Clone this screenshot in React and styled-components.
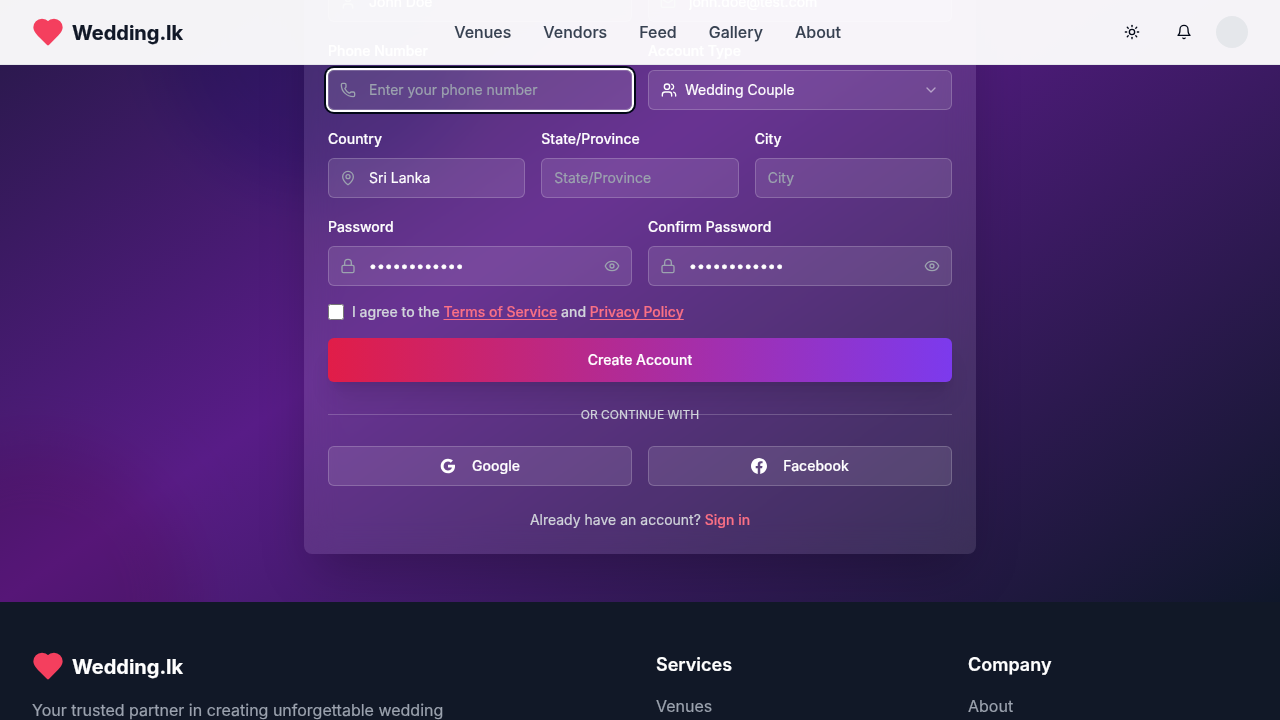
import React from "react";
import styled, { createGlobalStyle } from "styled-components";
import {
  Sun,
  User,
  Mail,
  Phone,
  Users,
  ChevronDown,
  MapPin,
  Lock,
  Eye,
} from "lucide-react";

const GlobalStyle = createGlobalStyle`
  *, *::before, *::after { box-sizing: border-box; }
  body {
    margin: 0;
    font-family: Inter, "Liberation Sans", sans-serif;
    font-size: 16px;
    line-height: 24px;
    background: #ffffff;
    color: #020817;
    -webkit-text-stroke: 0.2px currentColor;
  }
  a { color: inherit; text-decoration: none; }
  h3, p, ul { margin: 0; padding: 0; list-style: none; }
  input, button { font: inherit; }
`;

const Viewport = styled.div`
  height: 720px;
  overflow: hidden;
`;

const Header = styled.header`
  position: fixed;
  inset: 0 0 auto 0;
  z-index: 50;
  display: flex;
  align-items: center;
  justify-content: space-between;
  height: 65px;
  padding: 0 32px;
  background: rgba(255, 255, 255, 0.95);
  border-bottom: 1px solid #e5e7eb;
`;

const Brand = styled.a`
  display: flex;
  align-items: center;
  gap: 8px;
  height: 32px;
  font-size: 20px;
  line-height: 28px;
  font-weight: 700;
  color: ${(p) => (p.$light ? "#ffffff" : "#111827")};
`;

const BrandName = styled.span`
  padding-top: 2px;
`;

const HeartSvg = styled.svg`
  width: 32px;
  height: 32px;
  fill: #f43f5e;
  stroke: #f43f5e;
  stroke-width: 2;
  stroke-linecap: round;
  stroke-linejoin: round;
`;

const Nav = styled.nav`
  display: flex;
  gap: 32px;
  margin-right: 2px;
  -webkit-text-stroke-width: 0.1px;
`;

const NavLink = styled.a`
  font-weight: 500;
  color: #374151;
`;

const HeaderActions = styled.div`
  display: flex;
  align-items: center;
  gap: 16px;
`;

const IconButton = styled.button`
  display: grid;
  place-items: center;
  width: 36px;
  height: 36px;
  padding: 0;
  border: 0;
  background: transparent;
  color: #020817;
`;

const Avatar = styled.div`
  width: 32px;
  height: 32px;
  margin-left: -2px;
  border-radius: 50%;
  background: #e5e7eb;
`;

const Hero = styled.main`
  position: relative;
  display: flex;
  justify-content: center;
  height: 892px;
  margin-top: -290px;
  padding: 48px 0;
  overflow: hidden;
  background: linear-gradient(to bottom right, #0f172a, #581c87, #0f172a);
`;

const Blob = styled.div`
  position: absolute;
  width: 320px;
  height: 320px;
  border-radius: 50%;
  mix-blend-mode: multiply;
  filter: blur(30px);
  opacity: 0.3;
`;

const PinkBlob = styled(Blob)`
  bottom: -160px;
  left: -128px;
  background: #ec4899;
`;

const IndigoBlob = styled(Blob)`
  top: 160px;
  left: 160px;
  background: #6366f1;
`;

const Card = styled.section`
  position: relative;
  display: flex;
  flex-direction: column;
  justify-content: flex-end;
  width: 672px;
  padding: 24px;
  border-radius: 8px;
  background: rgba(255, 255, 255, 0.1);
  box-shadow: 0 25px 50px -12px rgba(0, 0, 0, 0.25);
  backdrop-filter: blur(16px);
`;

const Form = styled.form`
  display: flex;
  flex-direction: column;
  gap: 16px;
`;

const Row = styled.div`
  display: grid;
  grid-template-columns: repeat(${(p) => p.$cols}, minmax(0, 1fr));
  gap: 16px;
`;

const FieldBox = styled.div`
  display: flex;
  flex-direction: column;
  gap: 8px;
`;

const Label = styled.label`
  height: 24px;
  padding-top: 1px;
  font-size: 14px;
  line-height: 24px;
  font-weight: 500;
  color: #ffffff;
`;

const Control = styled.div`
  display: flex;
  align-items: center;
  height: 40px;
  padding: 0 11px;
  border: 1px solid rgba(255, 255, 255, 0.2);
  border-radius: 6px;
  background: rgba(255, 255, 255, 0.1);
  color: #9ca3af;
  box-shadow: ${(p) =>
    p.$focused ? "0 0 0 2px #ffffff, 0 0 0 4px #020817" : "none"};

  svg { flex: none; }
`;

const Input = styled.input`
  flex: 1;
  min-width: 0;
  height: 20px;
  margin-left: ${(p) => (p.$afterIcon ? "13px" : "1px")};
  padding: 0;
  border: 0;
  outline: 0;
  background: transparent;
  font-size: 14px;
  line-height: 20px;
  color: #ffffff;

  &[type="password"] { -webkit-text-stroke-width: 0.5px; }
  &::placeholder { color: #9ca3af; opacity: 1; }
`;

const SelectControl = styled(Control)`
  gap: 8px;
  padding: 0 12px;
  font-size: 14px;
  line-height: 20px;
  color: #ffffff;
`;

const SelectValue = styled.span`
  flex: 1;
`;

const Terms = styled.label`
  display: flex;
  align-items: center;
  gap: 8px;
  height: 20px;
  font-size: 14px;
  line-height: 20px;
  font-weight: 500;
  color: #d1d5db;
`;

const Checkbox = styled.input`
  width: 16px;
  height: 16px;
  margin: 0;
`;

const TermsLink = styled.a`
  color: #fb7185;
  text-decoration: underline;
  text-decoration-skip-ink: none;
  text-underline-offset: 2px;
`;

const SubmitButton = styled.button`
  height: 44px;
  border: 0;
  border-radius: 6px;
  background: linear-gradient(to right, #e11d48, #7c3aed);
  box-shadow: 0 20px 25px -5px rgba(0, 0, 0, 0.1),
    0 8px 10px -6px rgba(0, 0, 0, 0.1);
  font-size: 14px;
  line-height: 20px;
  font-weight: 500;
  color: #ffffff;
`;

const Divider = styled.div`
  display: grid;
  grid-template-rows: 16px;
  align-items: center;
  justify-items: center;
  margin: 24px 0;
  font-size: 12px;
  text-transform: uppercase;
  color: #d1d5db;

  &::before {
    content: "";
    grid-area: 1 / 1;
    width: 100%;
    height: 1px;
    background: rgba(255, 255, 255, 0.2);
  }
`;

const DividerText = styled.span`
  grid-area: 1 / 1;
  height: 16px;
  line-height: 18px;
`;

const SocialButton = styled.button`
  display: flex;
  align-items: center;
  justify-content: center;
  gap: 16px;
  height: 40px;
  padding: 0;
  border: 1px solid rgba(255, 255, 255, 0.2);
  border-radius: 6px;
  background: rgba(255, 255, 255, 0.1);
  font-size: 14px;
  line-height: 20px;
  font-weight: 500;
  color: #ffffff;
`;

const SignIn = styled.p`
  margin-top: 24px;
  font-size: 14px;
  line-height: 20px;
  text-align: center;
  color: #d1d5db;

  a { font-weight: 500; color: #fb7185; }
`;

const Footer = styled.footer`
  display: grid;
  grid-template-columns: 592px 280px 280px;
  gap: 32px;
  padding: 48px 32px;
  background: #111827;
  color: #9ca3af;
`;

const Tagline = styled.p`
  width: 448px;
  margin-top: 16px;
`;

const FooterTitle = styled.h3`
  height: 28px;
  margin-bottom: 16px;
  padding-top: 1px;
  font-size: 18px;
  line-height: 28px;
  font-weight: 600;
  color: #ffffff;
`;

function Heart() {
  return (
    <HeartSvg viewBox="0 0 24 24">
      <path d="M19 14c1.49-1.46 3-3.21 3-5.5A5.5 5.5 0 0 0 16.5 3c-1.76 0-3 .5-4.5 2-1.5-1.5-2.74-2-4.5-2A5.5 5.5 0 0 0 2 8.5c0 2.3 1.5 4.05 3 5.5l7 7Z" />
    </HeartSvg>
  );
}

function BellIcon() {
  return (
    <svg
      width="16"
      height="16"
      viewBox="0 0 24 24"
      fill="none"
      stroke="currentColor"
      strokeWidth="2"
      strokeLinecap="round"
      strokeLinejoin="round"
    >
      <path d="M6 8a6 6 0 0 1 12 0c0 7 3 9 3 9H3s3-2 3-9" />
      <path d="M10.3 21a1.94 1.94 0 0 0 3.4 0" />
    </svg>
  );
}

function GoogleIcon() {
  return (
    <svg width="16" height="16" viewBox="0 0 24 24" fill="currentColor">
      <path d="M22.56 12.25c0-.78-.07-1.53-.2-2.25H12v4.26h5.92c-.26 1.37-1.04 2.53-2.21 3.31v2.77h3.57c2.08-1.92 3.28-4.74 3.28-8.09z" />
      <path d="M12 23c2.97 0 5.46-.98 7.28-2.66l-3.57-2.77c-.98.66-2.23 1.06-3.71 1.06-2.86 0-5.29-1.93-6.16-4.53H2.18v2.84C3.99 20.53 7.7 23 12 23z" />
      <path d="M5.84 14.09c-.22-.66-.35-1.36-.35-2.09s.13-1.43.35-2.09V7.07H2.18C1.43 8.55 1 10.22 1 12s.43 3.45 1.18 4.93l2.85-2.22.81-.62z" />
      <path d="M12 5.38c1.62 0 3.06.56 4.21 1.64l3.15-3.15C17.45 2.09 14.97 1 12 1 7.7 1 3.99 3.47 2.18 7.07l3.66 2.84c.87-2.6 3.3-4.53 6.16-4.53z" />
    </svg>
  );
}

function FacebookIcon() {
  return (
    <svg width="16" height="16" viewBox="0 0 24 24" fill="currentColor">
      <path d="M24 12.073c0-6.627-5.373-12-12-12s-12 5.373-12 12c0 5.99 4.388 10.954 10.125 11.854v-8.385H7.078v-3.47h3.047V9.43c0-3.007 1.792-4.669 4.533-4.669 1.312 0 2.686.235 2.686.235v2.953H15.83c-1.491 0-1.956.925-1.956 1.874v2.25h3.328l-.532 3.47h-2.796v8.385C19.612 23.027 24 18.062 24 12.073z" />
    </svg>
  );
}

function Field({ label, icon: Icon, trailing: Trailing, focused, ...input }) {
  return (
    <FieldBox>
      <Label>{label}</Label>
      <Control $focused={focused}>
        {Icon && <Icon size={16} />}
        <Input $afterIcon={Boolean(Icon)} {...input} />
        {Trailing && <Trailing size={16} />}
      </Control>
    </FieldBox>
  );
}

const navItems = ["Venues", "Vendors", "Feed", "Gallery", "About"];

export default function App() {
  return (
    <Viewport>
      <GlobalStyle />
      <Header>
        <Brand>
          <Heart />
          <BrandName>Wedding.lk</BrandName>
        </Brand>
        <Nav>
          {navItems.map((item) => (
            <NavLink key={item}>{item}</NavLink>
          ))}
        </Nav>
        <HeaderActions>
          <IconButton aria-label="Theme">
            <Sun size={16} />
          </IconButton>
          <IconButton aria-label="Notifications">
            <BellIcon />
          </IconButton>
          <Avatar />
        </HeaderActions>
      </Header>

      <Hero>
        <PinkBlob />
        <IndigoBlob />
        <Card>
          <Form>
            <Row $cols={2}>
              <Field label="Full Name" icon={User} defaultValue="John Doe" />
              <Field
                label="Email"
                icon={Mail}
                defaultValue="john.doe@test.com"
              />
            </Row>
            <Row $cols={2}>
              <Field
                label="Phone Number"
                icon={Phone}
                placeholder="Enter your phone number"
                focused
              />
              <FieldBox>
                <Label>Account Type</Label>
                <SelectControl>
                  <Users size={16} />
                  <SelectValue>Wedding Couple</SelectValue>
                  <ChevronDown size={16} opacity={0.5} />
                </SelectControl>
              </FieldBox>
            </Row>
            <Row $cols={3}>
              <Field label="Country" icon={MapPin} defaultValue="Sri Lanka" />
              <Field label="State/Province" placeholder="State/Province" />
              <Field label="City" placeholder="City" />
            </Row>
            <Row $cols={2}>
              <Field
                label="Password"
                icon={Lock}
                trailing={Eye}
                type="password"
                defaultValue="weddingpass1"
              />
              <Field
                label="Confirm Password"
                icon={Lock}
                trailing={Eye}
                type="password"
                defaultValue="weddingpass1"
              />
            </Row>
            <Terms>
              <Checkbox type="checkbox" />
              <span>
                I agree to the <TermsLink>Terms of Service</TermsLink> and{" "}
                <TermsLink>Privacy Policy</TermsLink>
              </span>
            </Terms>
            <SubmitButton type="button">Create Account</SubmitButton>
          </Form>
          <Divider>
            <DividerText>Or continue with</DividerText>
          </Divider>
          <Row $cols={2}>
            <SocialButton>
              <GoogleIcon />
              Google
            </SocialButton>
            <SocialButton>
              <FacebookIcon />
              Facebook
            </SocialButton>
          </Row>
          <SignIn>
            Already have an account? <a>Sign in</a>
          </SignIn>
        </Card>
      </Hero>

      <Footer>
        <div>
          <Brand $light>
            <Heart />
            <BrandName>Wedding.lk</BrandName>
          </Brand>
          <Tagline>Your trusted partner in creating unforgettable wedding</Tagline>
        </div>
        <div>
          <FooterTitle>Services</FooterTitle>
          <a>Venues</a>
        </div>
        <div>
          <FooterTitle>Company</FooterTitle>
          <a>About</a>
        </div>
      </Footer>
    </Viewport>
  );
}
